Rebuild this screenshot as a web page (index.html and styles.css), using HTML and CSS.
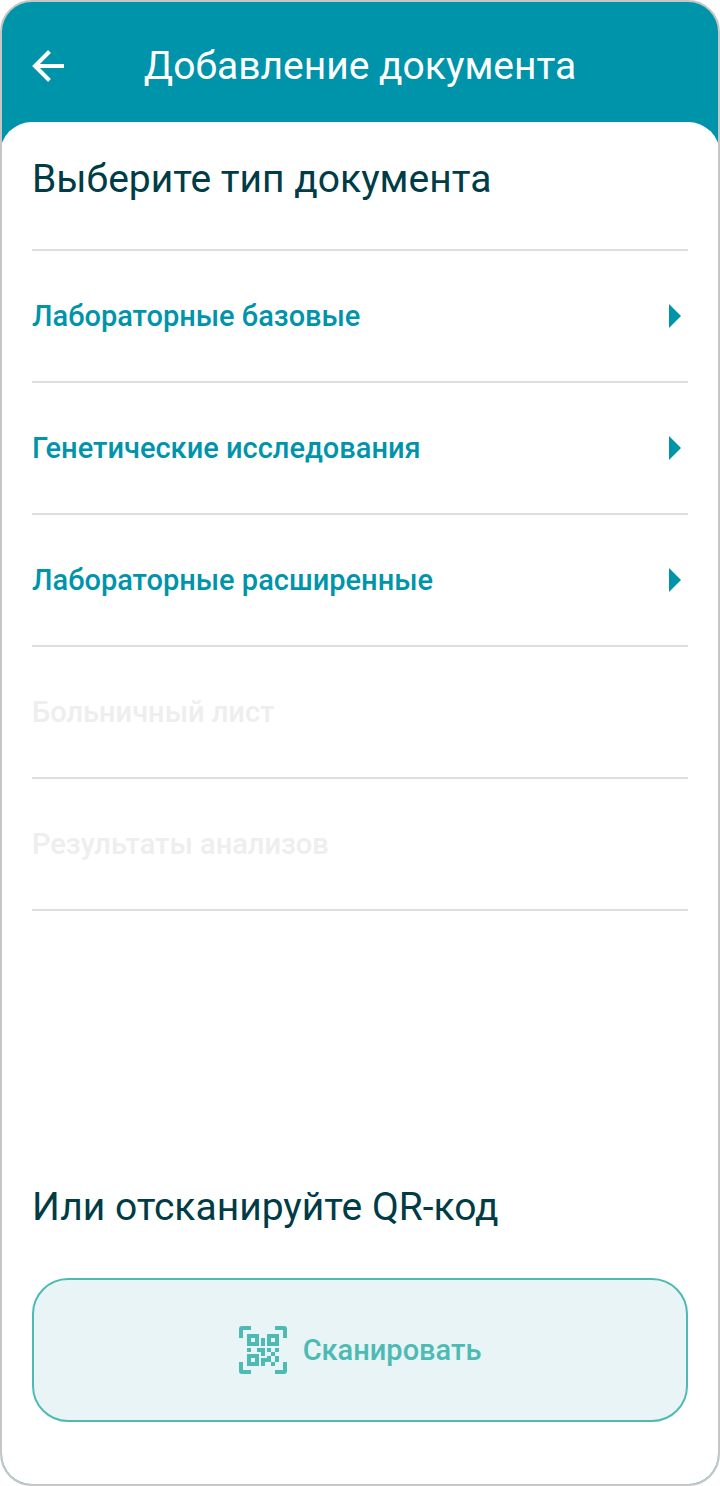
FILE: index.html
```html
<!DOCTYPE html>
<html lang="ru">
<head>
    <meta charset="UTF-8">
    <meta name="viewport" content="width=device-width, initial-scale=1.0">
    <title>Добавление документа</title>
    <link rel="stylesheet" href="styles.css">
</head>
<body>
    <div class="screen">
        <header class="header">
            <button type="button" class="back" aria-label="Назад">
                <svg width="32" height="32" viewBox="0 0 32 32" fill="none" stroke="currentColor" stroke-width="4">
                    <path d="M32 16H4M17.500 1.500L3 16l14.500 14.500"/>
                </svg>
            </button>
            <h1>Добавление документа</h1>
        </header>

        <main class="sheet">
            <h2>Выберите тип документа</h2>
            <ul class="doc-list">
                <li>
                    <a href="#basic">Лабораторные базовые
                        <svg class="arrow" width="12" height="24" viewBox="0 0 12 24"><path d="M0 0l12 12L0 24z"/></svg>
                    </a>
                </li>
                <li>
                    <a href="#genetic">Генетические исследования
                        <svg class="arrow" width="12" height="24" viewBox="0 0 12 24"><path d="M0 0l12 12L0 24z"/></svg>
                    </a>
                </li>
                <li>
                    <a href="#extended">Лабораторные расширенные
                        <svg class="arrow" width="12" height="24" viewBox="0 0 12 24"><path d="M0 0l12 12L0 24z"/></svg>
                    </a>
                </li>
                <li><span class="disabled">Больничный лист</span></li>
                <li><span class="disabled">Результаты анализов</span></li>
            </ul>

            <section class="scan">
                <h2>Или отсканируйте QR-код</h2>
                <button type="button" class="scan-btn">
                    <svg width="48" height="48" viewBox="0 0 48 48" fill="currentColor">
                        <path d="M0 12V3a3 3 0 0 1 3-3h9v4H4v8zM36 0h9a3 3 0 0 1 3 3v9h-4V4h-8zM48 36v9a3 3 0 0 1-3 3h-9v-4h8v-8zM12 48H3a3 3 0 0 1-3-3v-9h4v8h8z"/>
                        <path fill-rule="evenodd" d="M8 8h12v12H8zM12 12v4h4v-4zM28 8h12v12H28zM32 12v4h4v-4zM8 28h12v12H8zM12 32v4h4v-4z"/>
                        <path d="M22 12h4v8h-4zM8 22h4v4H8zM18 22h8v8h-4v-4h-4zM28 22h4v4h-4zM36 22h4v4h-4zM32 26h4v4h-4zM22 32h6v-2h4v6h-6v4h-4zM36 30h4v6h-4zM32 36h4v4h-4z"/>
                    </svg>
                    Сканировать
                </button>
            </section>
        </main>
    </div>
</body>
</html>
```
FILE: styles.css
```css
* {
    box-sizing: border-box;
}
body {
    margin: 0;
    font-family: Roboto, "Liberation Sans", sans-serif;
    background: #fff;
}
.screen {
    display: flex;
    flex-direction: column;
    min-height: 100vh;
    border: 2px solid #c6c6c6;
    border-radius: 32px;
    overflow: hidden;
    background: #0094ab;
}
.header {
    display: grid;
    grid-template-columns: 32px 1fr 32px;
    align-items: center;
    height: 120px;
    padding: 8px 30px 0;
    color: #fff;
}
.back {
    display: flex;
    padding: 0;
    border: none;
    background: none;
    color: inherit;
    cursor: pointer;
}
h1, h2 {
    margin: 0;
    font-size: 39px;
    font-weight: 400;
    line-height: 50px;
}
h1 {
    text-align: center;
}
h2 {
    color: #003c46;
}
/* runs under the frame border so the top corners meet it */
.sheet {
    flex: 1;
    display: flex;
    flex-direction: column;
    margin: 0 -2px;
    padding: 32px 32px 62px;
    border-radius: 32px 32px 0 0;
    background: #fff;
}
.doc-list {
    margin: 45px 0 0;
    padding: 0;
    list-style: none;
    border-top: 2px solid #dedede;
}
.doc-list li {
    border-bottom: 2px solid #dedede;
}
.doc-list a,
.disabled {
    display: flex;
    align-items: center;
    justify-content: space-between;
    height: 130px;
    padding-right: 7px;
    font-size: 29px;
    font-weight: 500;
    color: #0094ab;
    text-decoration: none;
}
.doc-list .disabled {
    color: #eee;
}
.arrow {
    fill: #0094ab;
}
.scan {
    margin-top: auto;
}
.scan-btn {
    display: flex;
    align-items: center;
    justify-content: center;
    gap: 16px;
    width: 100%;
    height: 144px;
    margin-top: 46px;
    border: 2px solid #4dbab3;
    border-radius: 36px;
    background: #e8f4f6;
    color: #4dbab3;
    font-family: inherit;
    font-size: 29px;
    font-weight: 500;
    cursor: pointer;
}
```
